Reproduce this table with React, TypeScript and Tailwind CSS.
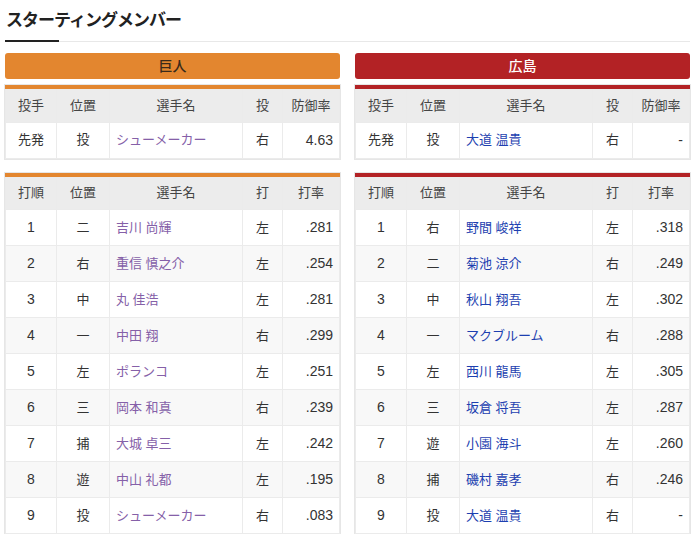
import React from 'react';

type Batter = { order: number; pos: string; name: string; hand: string; avg: string };
type Team = {
  name: string;
  barClass: string;
  topClass: string;
  nameClass: string;
  pitcher: { pos: string; name: string; hand: string; era: string };
  lineup: Batter[];
};

const teams: Team[] = [
  {
    name: '巨人',
    barClass: 'bg-[#e3862f] text-[#3a2a1a]',
    topClass: 'border-t-[#e3862f]',
    nameClass: 'text-[#8560a8]',
    pitcher: { pos: '投', name: 'シューメーカー', hand: '右', era: '4.63' },
    lineup: [
      { order: 1, pos: '二', name: '吉川 尚輝', hand: '左', avg: '.281' },
      { order: 2, pos: '右', name: '重信 慎之介', hand: '左', avg: '.254' },
      { order: 3, pos: '中', name: '丸 佳浩', hand: '左', avg: '.281' },
      { order: 4, pos: '一', name: '中田 翔', hand: '右', avg: '.299' },
      { order: 5, pos: '左', name: 'ポランコ', hand: '左', avg: '.251' },
      { order: 6, pos: '三', name: '岡本 和真', hand: '右', avg: '.239' },
      { order: 7, pos: '捕', name: '大城 卓三', hand: '左', avg: '.242' },
      { order: 8, pos: '遊', name: '中山 礼都', hand: '左', avg: '.195' },
      { order: 9, pos: '投', name: 'シューメーカー', hand: '右', avg: '.083' },
    ],
  },
  {
    name: '広島',
    barClass: 'bg-[#b32225] text-white',
    topClass: 'border-t-[#b32225]',
    nameClass: 'text-[#1d3fb0]',
    pitcher: { pos: '投', name: '大道 温貴', hand: '右', era: '-' },
    lineup: [
      { order: 1, pos: '右', name: '野間 峻祥', hand: '左', avg: '.318' },
      { order: 2, pos: '二', name: '菊池 涼介', hand: '右', avg: '.249' },
      { order: 3, pos: '中', name: '秋山 翔吾', hand: '左', avg: '.302' },
      { order: 4, pos: '一', name: 'マクブルーム', hand: '右', avg: '.288' },
      { order: 5, pos: '左', name: '西川 龍馬', hand: '左', avg: '.305' },
      { order: 6, pos: '三', name: '坂倉 将吾', hand: '左', avg: '.287' },
      { order: 7, pos: '遊', name: '小園 海斗', hand: '左', avg: '.260' },
      { order: 8, pos: '捕', name: '磯村 嘉孝', hand: '右', avg: '.246' },
      { order: 9, pos: '投', name: '大道 温貴', hand: '右', avg: '-' },
    ],
  },
];

const cell = 'border border-[#ebebeb] px-[6px]';

const Cols = () => (
  <colgroup>
    <col className="w-[51px]" />
    <col className="w-[53px]" />
    <col className="w-[133px]" />
    <col className="w-[40px]" />
    <col />
  </colgroup>
);

const HeaderRow = ({ labels }: { labels: string[] }) => (
  <tr className="h-[35px] bg-[#ececec] text-[#444]">
    {labels.map((l) => (
      <th key={l} className={`${cell} font-normal text-center`}>
        {l}
      </th>
    ))}
  </tr>
);

const TeamBlock = ({ team }: { team: Team }) => (
  <div className="flex flex-col">
    <div className={`h-[26px] rounded-[3px] text-center text-[14px] leading-[26px] font-medium ${team.barClass}`}>
      {team.name}
    </div>

    {/* 先発投手 */}
    <table className={`mt-[6px] w-full table-fixed border-collapse border-t-4 text-[13px] shadow-[0_0_0_1px_#e6e6e6] ${team.topClass}`}>
      <Cols />
      <thead>
        <HeaderRow labels={['投手', '位置', '選手名', '投', '防御率']} />
      </thead>
      <tbody>
        <tr className="h-[36px] bg-white text-[#333]">
          <td className={`${cell} text-center`}>先発</td>
          <td className={`${cell} text-center`}>{team.pitcher.pos}</td>
          <td className={`${cell} ${team.nameClass}`}>{team.pitcher.name}</td>
          <td className={`${cell} text-center`}>{team.pitcher.hand}</td>
          <td className={`${cell} text-right text-[14px]`}>{team.pitcher.era}</td>
        </tr>
      </tbody>
    </table>

    {/* 打順 */}
    <table className={`mt-[14px] w-full table-fixed border-collapse border-t-4 text-[13px] shadow-[0_0_0_1px_#e6e6e6] ${team.topClass}`}>
      <Cols />
      <thead>
        <HeaderRow labels={['打順', '位置', '選手名', '打', '打率']} />
      </thead>
      <tbody>
        {team.lineup.map((b) => (
          <tr key={b.order} className="h-[36px] text-[#333] even:bg-[#f8f8f8] odd:bg-white">
            <td className={`${cell} text-center text-[14px]`}>{b.order}</td>
            <td className={`${cell} text-center`}>{b.pos}</td>
            <td className={`${cell} ${team.nameClass}`}>{b.name}</td>
            <td className={`${cell} text-center`}>{b.hand}</td>
            <td className={`${cell} text-right text-[14px]`}>{b.avg}</td>
          </tr>
        ))}
      </tbody>
    </table>
  </div>
);

export default function App() {
  return (
    <div className="w-[700px] bg-white pl-[5px] pr-[10px] pt-[10px] font-['Liberation_Sans','Noto_Sans_CJK_JP',sans-serif]">
      <h2 className="pl-[1px] text-[17px] font-bold leading-[22px] tracking-[-1px] text-[#222]">スターティングメンバー</h2>
      <div className="relative mt-[8px] h-[2px] border-b border-[#e8e8e8]">
        <div className="absolute left-0 top-0 h-[2px] w-[54px] bg-[#222]" />
      </div>
      <div className="mt-[11px] grid grid-cols-2 gap-[15px]">
        {teams.map((t) => (
          <TeamBlock key={t.name} team={t} />
        ))}
      </div>
    </div>
  );
}
